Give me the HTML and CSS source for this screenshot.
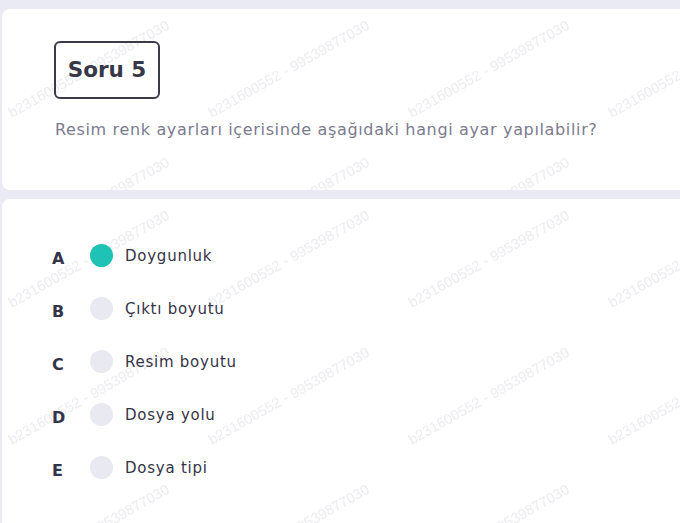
FILE: index.html
```html
<!DOCTYPE html>
<html lang="tr">
<head>
<meta charset="utf-8">
<title>Soru 5</title>
<link rel="stylesheet" href="styles.css">
</head>
<body>
<div class="page">
  <section class="card card-question">
    <svg class="wm" aria-hidden="true">
      <defs>
        <pattern id="wm1" width="200" height="137" patternUnits="userSpaceOnUse">
          <text x="10" y="109" transform="rotate(-29.5 10 109)">b231600552 - 99539877030</text>
        </pattern>
      </defs>
      <rect width="100%" height="100%" fill="url(#wm1)"/>
    </svg>
    <div class="badge">Soru 5</div>
    <p class="question">Resim renk ayarları içerisinde aşağıdaki hangi ayar yapılabilir?</p>
  </section>
  <section class="card card-options">
    <svg class="wm" aria-hidden="true">
      <defs>
        <pattern id="wm2" width="200" height="137" patternUnits="userSpaceOnUse">
          <text x="10" y="109" transform="rotate(-29.5 10 109)">b231600552 - 99539877030</text>
        </pattern>
      </defs>
      <rect width="100%" height="100%" fill="url(#wm2)"/>
    </svg>
    <ul class="options">
      <li class="option"><span class="letter">A</span><span class="radio selected"></span><span class="label">Doygunluk</span></li>
      <li class="option"><span class="letter">B</span><span class="radio"></span><span class="label">Çıktı boyutu</span></li>
      <li class="option"><span class="letter">C</span><span class="radio"></span><span class="label">Resim boyutu</span></li>
      <li class="option"><span class="letter">D</span><span class="radio"></span><span class="label">Dosya yolu</span></li>
      <li class="option"><span class="letter">E</span><span class="radio"></span><span class="label">Dosya tipi</span></li>
    </ul>
  </section>
</div>
</body>
</html>
```
FILE: styles.css
```css
html, body {
  margin: 0;
  padding: 0;
  background: #e9eaf3;
  overflow: hidden;
  height: 100%;
}
body {
  font-family: "DejaVu Sans", "Open Sans", sans-serif;
  color: #343446;
}
.page {
  width: 720px;
  padding: 9px 0 0 2px;
  display: flex;
  flex-direction: column;
  gap: 9px;
}
.card {
  position: relative;
  background: #ffffff;
  border-radius: 8px;
  overflow: hidden;
}
.wm {
  position: absolute;
  left: 0;
  top: 0;
  width: 100%;
  height: 100%;
  z-index: 0;
}
.wm text {
  font-family: "Liberation Sans", Arial, sans-serif;
  font-size: 14.5px;
  fill: #ececf1;
}
.card > *:not(.wm) {
  position: relative;
  z-index: 1;
}
.card-question {
  height: 181px;
  box-sizing: border-box;
  padding: 32px 0 0 52px;
}
.badge {
  display: inline-flex;
  align-items: center;
  justify-content: center;
  box-sizing: border-box;
  width: 106px;
  height: 58px;
  border: 2px solid #3a3a4a;
  border-radius: 6px;
  font-size: 21.5px;
  font-weight: 700;
  color: #373748;
  padding-bottom: 1px;
}
.question {
  margin: 19px 0 0 1px;
  font-size: 16px;
  letter-spacing: 0.65px;
  line-height: 24px;
  color: #7b7b8f;
}
.card-options {
  height: 340px;
}
.options {
  list-style: none;
  margin: 0;
  padding: 45px 0 0 50px;
  display: flex;
  flex-direction: column;
  gap: 30px;
}
.option {
  display: flex;
  align-items: center;
  height: 23px;
}
.letter {
  width: 38px;
  font-size: 16px;
  font-weight: 700;
  color: #33334a;
  position: relative;
  top: 3px;
}
.radio {
  width: 23px;
  height: 23px;
  border-radius: 50%;
  background: #e8e9f1;
  flex: none;
}
.radio.selected {
  background: #1fc3b6;
}
.label {
  margin-left: 12px;
  font-size: 15px;
  letter-spacing: 0.75px;
  color: #343446;
}
```
